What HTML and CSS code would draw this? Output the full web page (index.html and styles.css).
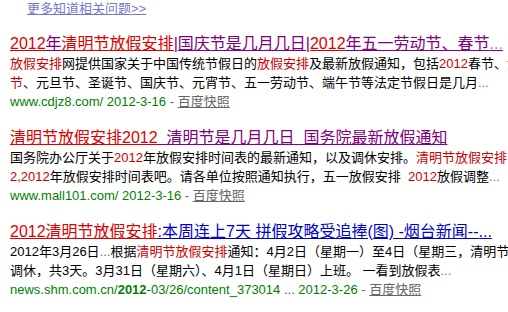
FILE: index.html
```html
<!DOCTYPE html>
<html lang="zh-CN">
<head>
    <meta charset="UTF-8">
    <title>清明节放假安排 - 百度搜索</title>
    <link rel="stylesheet" href="styles.css">
</head>
<body>
    <div class="more"><a href="#">更多知道相关问题&gt;&gt;</a></div>

    <div class="result">
      <h3 class="t"><a href="#" class="visited"><em>2012</em>年<em>清明节放假安排</em>|国庆节是几月几日|<em>2012</em>年五一劳动节、春节<span class="dots pink">...</span></a></h3>
      <p class="abs"><em>放假安排</em>网提供国家关于中国传统节假日的<em>放假安排</em>及最新放假通知，包括<em>2012</em>春节、<em>清</em><br><em>节</em>、元旦节、圣诞节、国庆节、元宵节、五一劳动节、端午节等法定节假日是几月<span class="dots brown">...</span></p>
      <p class="url"><span class="g">www.cdjz8.com/ 2012-3-16</span> - <a href="#" class="m">百度快照</a></p>
    </div>

    <div class="result">
      <h3 class="t"><a href="#" class="visited"><em>清明节放假安排2012</em>&nbsp; 清明节是几月几日&nbsp; 国务院最新放假通知</a></h3>
      <p class="abs">国务院办公厅关于<em>2012</em>年放假安排时间表的最新通知，以及调休安排。<em>清明节放假安排</em><br><em>2,2012</em>年放假安排时间表吧。请各单位按照通知执行，五一放假安排&nbsp; <em>2012</em>放假调整<span class="dots blue">...</span></p>
      <p class="url"><span class="g">www.mall101.com/ 2012-3-16</span> - <a href="#" class="m">百度快照</a></p>
    </div>

    <div class="result">
      <h3 class="t"><a href="#"><em>2012清明节放假安排</em>:本周连上7天 拼假攻略受追捧(图) -烟台新闻--<span class="dots">...</span></a></h3>
      <p class="abs">2012年3月26日<span class="dots brown">...</span>根据<em>清明节放假安排</em>通知：4月2日（星期一）至4日（星期三，清明节<br>调休，共3天。3月31日（星期六）、4月1日（星期日）上班。 一看到放假表<span class="dots blue">...</span></p>
      <p class="url"><span class="g">news.shm.com.cn/<b>2012</b>-03/26/content_373014 ... 2012-3-26</span> - <a href="#" class="m">百度快照</a></p>
    </div>
</body>
</html>
```

FILE: styles.css
```css
body{
  margin: 0;
  overflow: hidden;
  background: #fff;
  color: #000;
  font-family: "Liberation Sans", "Noto Sans CJK SC", sans-serif;
  font-size: 13px;
}
.more{
  margin-left: 27px;
  line-height: 17px;
}
.more a{
  color: #7777cc;
}
.result{
  margin-top: 17px;
  padding-left: 10px;
  white-space: nowrap;
}
.t{
  margin: 0;
  font-size: 16px;
  font-weight: normal;
  line-height: 20px;
}
.t a{
  color: #0000cc;
}
.t a.visited{
  color: #800080;
}
.t em{
  font-style: normal;
  color: #dd0000;
  text-decoration: underline;
}
.abs{
  margin: 0;
  line-height: 19px;
}
.abs em{
  font-style: normal;
  color: #cc0000;
}
.url{
  margin: 0;
  line-height: 19px;
  color: #666;
}
.g{
  color: #008000;
}
.m{
  color: #666;
}
.dots.pink{ color: #c070c0; }
.dots.brown{ color: #a07030; }
.dots.blue{ color: #5577bb; }
```
